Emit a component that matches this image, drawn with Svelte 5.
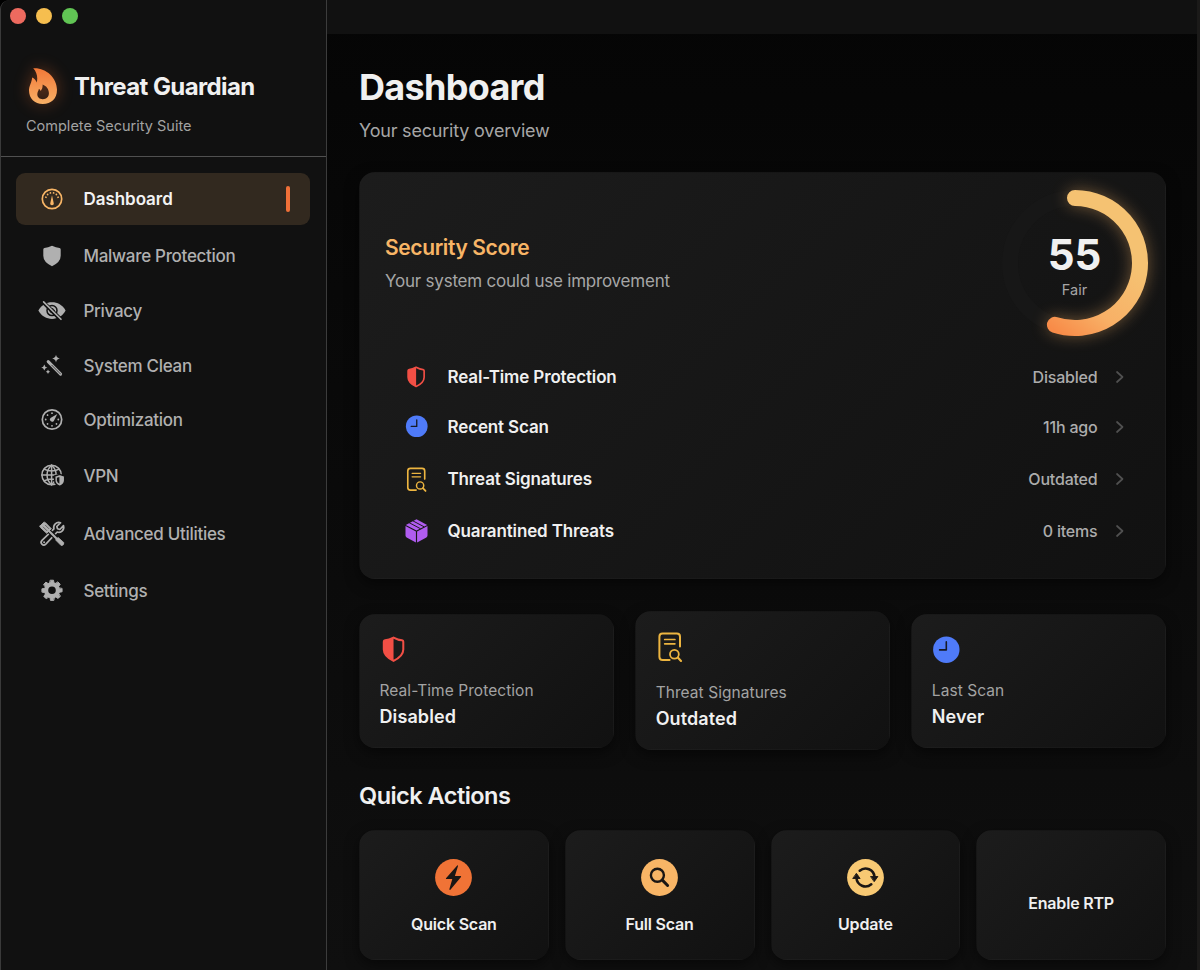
<script>
  const nav = [
    { icon: 'gauge', label: 'Dashboard', h: 52, active: true },
    { icon: 'shield', label: 'Malware Protection', h: 53 },
    { icon: 'eye', label: 'Privacy', h: 50 },
    { icon: 'wand', label: 'System Clean', h: 51 },
    { icon: 'speed', label: 'Optimization', h: 50 },
    { icon: 'globe', label: 'VPN', h: 53 },
    { icon: 'tools', label: 'Advanced Utilities', h: 55 },
    { icon: 'gear', label: 'Settings', h: 52 }
  ];
  const rows = [
    { icon: 'half', label: 'Real-Time Protection', value: 'Disabled', h: 49 },
    { icon: 'clock', label: 'Recent Scan', value: '11h ago', h: 50 },
    { icon: 'doc', label: 'Threat Signatures', value: 'Outdated', h: 55 },
    { icon: 'box', label: 'Quarantined Threats', value: '0 items', h: 49 }
  ];
  const stats = [
    { icon: 'half', label: 'Real-Time Protection', value: 'Disabled' },
    { icon: 'doc', label: 'Threat Signatures', value: 'Outdated', tall: true },
    { icon: 'clock', label: 'Last Scan', value: 'Never' }
  ];
  const actions = [
    { icon: 'bolt', label: 'Quick Scan' },
    { icon: 'search', label: 'Full Scan' },
    { icon: 'sync', label: 'Update' },
    { icon: null, label: 'Enable RTP' }
  ];
  const score = 55;
  const end = (score / 100) * 2 * Math.PI;
  const arc = `M73 8 A65 65 0 ${score > 50 ? 1 : 0} 1 ${73 + 65 * Math.sin(end)} ${73 - 65 * Math.cos(end)}`;
  const ticks = [-90, -54, -18, 18, 54, 90];
  const dots = [-135, -90, -45, 0, 90, 135, 180];
  const teeth = [0, 45, 90, 135, 180, 225, 270, 315];
</script>

{#snippet navIcon(name)}
  <svg width="28" height="28" viewBox="0 0 28 28" fill="none" stroke="currentColor" stroke-linecap="round" stroke-linejoin="round">
    {#if name === 'gauge'}
      <circle cx="14" cy="14" r="9.7" stroke-width="1.7" />
      {#each ticks as a}
        <circle cx="14" cy="7.7" r="0.9" fill="currentColor" stroke="none" transform="rotate({a * 0.82} 14 14)" />
      {/each}
      <path d="M14 10.2 L15.7 18 A1.75 1.75 0 1 1 12.3 18 Z" fill="currentColor" stroke="none" />
    {:else if name === 'shield'}
      <path d="M14 3.8 Q18 5.8 21.6 6.1 Q22.7 6.3 22.7 7.4 V13.8 Q22.7 20.2 14 24.2 Q5.3 20.2 5.3 13.8 V7.4 Q5.3 6.3 6.4 6.1 Q10 5.8 14 3.8 Z" fill="currentColor" stroke="none" />
    {:else if name === 'eye'}
      <path d="M.4 13.6 C3.500 7.800 8.500 5.300 14 5.300 S24.500 7.800 27.600 13.600 C24.500 19.400 19.500 21.900 14 21.900 S3.500 19.400 .4 13.600 Z" fill="currentColor" stroke="none" />
      <circle cx="14" cy="13.600" r="5" stroke="#111" stroke-width="1.500" />
      <circle cx="14" cy="13.600" r="2.100" stroke="#111" stroke-width="1" />
      <path d="M4.700 4.700 L22.700 22.500" stroke="#111" stroke-width="4" />
      <path d="M5.600 4.900 L23 22.300" stroke-width="1.600" />
    {:else if name === 'wand'}
      <path d="M10.200 9.600 L22.600 22.100" stroke-width="3" />
      <path d="M13.800 13.200 L22.500 22" stroke="#111" stroke-width=".7" />
      <path d="M18 2.800 Q18.600 6 21.800 6.600 Q18.600 7.200 18 10.400 Q17.400 7.200 14.200 6.600 Q17.400 6 18 2.800 Z M6.300 12.400 Q6.800 15 9.400 15.500 Q6.800 16 6.300 18.600 Q5.800 16 3.200 15.500 Q5.800 15 6.300 12.400 Z M10 17.600 Q10.400 19.400 12.200 19.800 Q10.400 20.200 10 22 Q9.600 20.200 7.800 19.800 Q9.600 19.400 10 17.600 Z" fill="currentColor" stroke="none" />
    {:else if name === 'speed'}
      <circle cx="14" cy="13.500" r="9.700" stroke-width="1.700" />
      {#each dots as a}
        <circle cx="14" cy="7.200" r=".9" fill="currentColor" stroke="none" transform="rotate({a} 14 13.500)" />
      {/each}
      <path d="M19.300 8 L15.800 15 A2.150 2.150 0 1 1 12.500 11.900 Z" fill="currentColor" stroke="none" />
    {:else if name === 'globe'}
      <g stroke-width="1.500">
        <circle cx="13.600" cy="13" r="9.700" />
        <path d="M13.600 3.300 V22.700 M3.900 13 H23.300 M6 7.200 Q13.600 11 21.200 7.200 M6 18.800 Q13.600 15 21.200 18.800" />
        <path d="M13.600 3.300 C7.500 8.500 7.500 17.500 13.600 22.700 M13.600 3.300 C19.700 8.500 19.700 17.500 13.600 22.700" />
      </g>
      <path d="M21.700 12.400 L26.700 14 V18.200 Q26.700 22.300 21.700 24.400 Q16.700 22.300 16.700 18.200 V14 Z" fill="currentColor" stroke="#111" stroke-width="1.500" />
      <path d="M21.400 15 L18.900 15.700 V18.300 Q18.900 20.400 21.400 21.700 Z" fill="#111" stroke="none" />
    {:else if name === 'tools'}
      <path d="M22.600 2.700 L18.800 6.500 L19.500 8.800 L21.800 9.500 L25.500 5.700 C26.700 9.800 23.200 13.300 19.200 12 L7.800 24.200 C5 26.700 1.500 23 4 20.300 L15.900 8.900 C14.800 5 18.400 1.300 22.600 2.700 Z" stroke-width="1.700" />
      <circle cx="6.100" cy="22.200" r="1" fill="currentColor" stroke="none" />
      <path d="M9.500 9.500 L18.500 18.500" stroke="#111" stroke-width="4.400" stroke-linecap="butt" />
      <path d="M10 10 L19.500 19.500" stroke-width="2.100" />
      <path d="M2 6 L5.700 2.300 Q6.700 1.900 7.500 2.700 L13.300 8.700 L8.700 13.300 L2.500 7.600 Q1.700 6.800 2 6 Z" fill="currentColor" stroke="currentColor" stroke-width=".9" />
      <path d="M5.200 7 L8.800 10.600 M7.400 5.200 L10.800 8.600" stroke="#111" stroke-width=".5" />
      <path d="M18.200 18.700 L20.300 17.600 L25.900 22.700 Q26 25.400 23.200 25.600 L18.200 20.600 Z" fill="currentColor" stroke="currentColor" stroke-width=".8" />
    {:else if name === 'gear'}
      {#each teeth as a}
        <path d="M12.500 3.200 H15.500 L16.400 8 H11.600 Z" fill="currentColor" stroke="currentColor" stroke-width=".9" transform="rotate({a} 14 13.300)" />
      {/each}
      <circle cx="14" cy="13.300" r="5.900" stroke-width="4.200" />
    {/if}
  </svg>
{/snippet}

{#snippet statusIcon(name, size)}
  <svg width={size} height={size} viewBox="0 0 28 28" fill="none" stroke-linecap="round" stroke-linejoin="round">
    {#if name === 'half'}
      <g transform="translate(-1.3 -1.6) scale(1.06)">
        <path d="M14 3 Q18.300 5.400 22 5.600 Q23.200 5.800 23.200 7 V14.300 Q23.200 20.600 14 25 Q4.800 20.600 4.800 14.300 V7 Q4.800 5.800 6 5.600 Q9.700 5.400 14 3 Z" stroke="#f24f45" stroke-width="1.900" />
        <path d="M14 3 V25 Q4.800 20.600 4.800 14.300 V7 Q4.800 5.800 6 5.600 Q9.700 5.400 14 3 Z" fill="#f24f45" />
      </g>
    {:else if name === 'clock'}
      <circle cx="14.300" cy="13.700" r="13.200" fill="#4f7bf9" />
      <path d="M14.300 5.900 V13.900 H7.600" stroke="#161a26" stroke-width="1.600" />
    {:else if name === 'doc'}
      <g transform="translate(0 -.5)">
        <path d="M24 14 V4.200 Q24 1 20.800 1 H6.600 Q3.400 1 3.400 4.200 V24.200 Q3.400 27.400 6.600 27.400 H13.600" stroke="#edb540" stroke-width="2" />
        <path d="M8.700 7 H18.900 M8.700 11.300 H18.900" stroke="#edb540" stroke-width="1.700" />
        <circle cx="18.400" cy="21.800" r="4.400" stroke="#edb540" stroke-width="1.800" />
        <path d="M21.800 25.100 L25 28.400" stroke="#edb540" stroke-width="2.200" />
      </g>
    {:else if name === 'box'}
      <g transform="translate(0 -1)">
        <path d="M14 .2 L27 7 L14 13.800 L1 7 Z" fill="#b05cf0" />
        <path d="M.6 8.300 L13.300 15 V28.300 L2 22.300 Q.6 21.500 .6 20 Z M27.400 8.300 L14.700 15 V28.300 L26 22.300 Q27.400 21.500 27.400 20 Z" fill="#b05cf0" />
        <path d="M5.300 4.400 L18.500 11.400 M9.700 2.100 L22.900 9.100" stroke="#1a1a1a" stroke-width="1.200" />
      </g>
    {/if}
  </svg>
{/snippet}

<div class="window">
  <aside>
    <div class="lights"><i class="red"></i><i class="amber"></i><i class="green"></i></div>
    <header class="brand">
      <div class="name">
        <svg class="flame" width="30" height="38" viewBox="0 0 30 38">
          <defs>
            <linearGradient id="flame" x1="0" y1="0" x2="0" y2="1">
              <stop offset="0" stop-color="#f27838" />
              <stop offset="1" stop-color="#f8b066" />
            </linearGradient>
          </defs>
          <path fill="url(#flame)" fill-rule="evenodd" d="M5.200 1.200 C17 .2 29 10 29 22.800 C29 31.800 23.300 37 14.800 37 C6.500 37 1 31.500 1 23.600 C1 18.500 3.800 15.800 4.100 10.400 C6.300 11 8 13.200 8.800 15.500 C9.900 10.500 9 5.200 5.200 1.200 Z M14.600 17.500 C14.900 20.800 13.700 22.300 12.800 23.900 C12.300 22.900 11.700 22.200 10.900 21.700 C10.700 23.800 9.300 24.700 9.300 27.300 C9.300 30.300 11.500 32.200 14.800 32.200 C18.400 32.200 20.900 29.800 20.900 26.300 C20.900 22.200 18.500 19 14.600 17.500 Z" />
        </svg>
        <span>Threat Guardian</span>
      </div>
      <div class="tag">Complete Security Suite</div>
    </header>
    <nav>
      {#each nav as item}
        <div class="item" class:active={item.active} style="height:{item.h}px">
          {@render navIcon(item.icon)}
          <span>{item.label}</span>
          {#if item.active}<b></b>{/if}
        </div>
      {/each}
    </nav>
  </aside>

  <main>
    <div class="titlebar"></div>
    <div class="content">
      <h1>Dashboard</h1>
      <p class="sub">Your security overview</p>

      <section class="card score">
        <div class="top">
          <div class="words">
            <h2>Security Score</h2>
            <p>Your system could use improvement</p>
          </div>
          <div class="ring">
            <svg width="146" height="146" viewBox="0 0 146 146" fill="none">
              <defs>
                <linearGradient id="arc" gradientUnits="userSpaceOnUse" x1="110" y1="60" x2="52" y2="140">
                  <stop offset="0" stop-color="#f5c272" />
                  <stop offset=".6" stop-color="#f8b066" />
                  <stop offset="1" stop-color="#f88b48" />
                </linearGradient>
              </defs>
              <circle cx="73" cy="73" r="65" stroke="#171717" stroke-width="16" />
              <path class="arc" d={arc} stroke="url(#arc)" stroke-width="16" stroke-linecap="round" />
            </svg>
            <div class="num"><strong>{score}</strong><span>Fair</span></div>
          </div>
        </div>
        <div class="rows">
          {#each rows as row}
            <div class="row" style="height:{row.h}px">
              {@render statusIcon(row.icon, 23)}
              <span class="label">{row.label}</span>
              <span class="value">{row.value}</span>
              <svg class="chev" width="8" height="12" viewBox="0 0 8 12" fill="none" stroke="#505050" stroke-width="1.700" stroke-linecap="round" stroke-linejoin="round"><path d="M1 1 L6.500 6 L1 11" /></svg>
            </div>
          {/each}
        </div>
      </section>

      <section class="stats">
        {#each stats as s}
          <div class="card stat" class:tall={s.tall}>
            {@render statusIcon(s.icon, 28)}
            <span class="label">{s.label}</span>
            <strong>{s.value}</strong>
          </div>
        {/each}
      </section>

      <h3>Quick Actions</h3>
      <section class="actions">
        {#each actions as a}
          <div class="card action">
            {#if a.icon}
              <svg width="37" height="37" viewBox="0 0 37 37" fill="none" stroke="#1a1614" stroke-linecap="round" stroke-linejoin="round">
                {#if a.icon === 'bolt'}
                  <circle cx="18.500" cy="18.500" r="18.400" fill="#f07336" stroke="none" />
                  <path d="M22.200 6.500 L11 19.200 Q10.600 20 11.500 20.100 H17.300 L14.400 30 Q14.300 31.300 15.400 30.700 L26 18 Q26.500 17 25.500 16.900 H19.900 L23 7 Q23 6 22.200 6.500 Z" fill="#1a1614" stroke="none" />
                {:else if a.icon === 'search'}
                  <circle cx="18.500" cy="18.500" r="18.400" fill="#f8b566" stroke="none" />
                  <circle cx="16.400" cy="16.200" r="6.500" stroke-width="2.400" />
                  <path d="M21.600 21.400 L26.600 26.500" stroke-width="3" />
                {:else}
                  <circle cx="18.500" cy="18.500" r="18.400" fill="#f8c973" stroke="none" />
                  <path d="M12.700 11.700 A9 9 0 0 1 27.500 18 M24.300 25.300 A9 9 0 0 1 9.500 19" stroke-width="2.600" />
                  <path d="M23.900 17.500 H30.900 L27.400 22.400 Z M6.100 19.500 H13.100 L9.600 14.600 Z" fill="#1a1614" stroke-width=".9" />
                {/if}
              </svg>
            {/if}
            <span>{a.label}</span>
          </div>
        {/each}
      </section>
    </div>
  </main>
  <div class="edge"></div>
</div>

<style>
  :global(body) { background: #000; overflow: hidden; }
  .window {
    box-sizing: border-box; width: 1200px; height: 970px; display: flex; overflow: hidden;
    background: #111; color: #f0f0f0; font-family: Inter, sans-serif;
    border-top-left-radius: 9px;
  }
  h1, h2, h3, p { margin: 0; }
  svg { display: block; flex: none; overflow: visible; }
  aside {
    box-sizing: border-box; width: 327px; flex: none; height: 970px;
    border-left: 1px solid #3a3a3a; border-right: 1px solid #3c3c3c; border-top-left-radius: 9px;
    background: #111;
  }
  .lights { display: flex; gap: 10px; padding: 8px 0 0 9px; height: 58px; box-sizing: border-box; }
  .lights i { width: 16px; height: 16px; border-radius: 50%; }
  .red { background: #ed6a5f; }
  .amber { background: #f6be4f; }
  .green { background: #61c554; }
  .brand { height: 99px; box-sizing: border-box; border-bottom: 1px solid #505050; padding: 9px 0 0 25px; }
  .name { display: flex; align-items: center; height: 38px; padding-left: 2px; gap: 16px; font-size: 24px; font-weight: 700; letter-spacing: -0.6px; }
  .flame { filter: drop-shadow(0 0 8px rgba(240, 110, 45, .4)); }
  .tag { margin-top: 12px; font-size: 14.500px; line-height: 18px; color: #a3a3a3; letter-spacing: 0; }
  nav { display: flex; flex-direction: column; gap: 4px; padding: 16px 16px 0 15px; }
  .item { box-sizing: border-box; display: flex; align-items: center; padding: 0 20px 0 22px; border-radius: 9px; font-size: 17px; font-weight: 500; letter-spacing: -.3px; color: #b0b0b0; }
  .item span { margin-left: 17.500px; }
  .item.active { background: #32291f; color: #f2f2f2; font-weight: 600; letter-spacing: -.05px; }
  .item.active svg { color: #f8b566; }
  .item b { margin-left: auto; width: 4.500px; height: 26px; border-radius: 2px; background: #f07038; }
  main { flex: 1; min-width: 0; background: linear-gradient(#050505, #0f0f0f); }
  .titlebar { height: 34px; background: #111; }
  .content { padding: 31px 31px 0 32px; }
  h1 { font-size: 36px; line-height: 44px; font-weight: 700; letter-spacing: -.7px; }
  .sub { margin-top: 10px; font-size: 18px; line-height: 24px; color: #a6a6a6; letter-spacing: -.2px; }
  .card {
    box-sizing: border-box; background: linear-gradient(135deg, #1c1c1c, #111);
    border: 1px solid rgba(255, 255, 255, .008); border-radius: 16px;
    box-shadow: 0 5px 14px rgba(0, 0, 0, .5);
  }
  .score { height: 407px; margin-top: 29px; }
  .top { display: flex; justify-content: space-between; height: 179.500px; padding: 17px 17px 0 25px; box-sizing: border-box; }
  .words { padding-top: 45px; }
  h2 { font-size: 21px; line-height: 26px; font-weight: 600; color: #f8b566; letter-spacing: -.38px; }
  .words p { margin-top: 9px; font-size: 17px; line-height: 22px; color: #a6a6a6; letter-spacing: -.22px; }
  .ring { width: 146px; height: 146px; position: relative; }
  .arc { filter: drop-shadow(0 0 8px rgba(248, 181, 102, .4)); }
  .num { position: absolute; inset: 0; display: flex; flex-direction: column; align-items: center; padding: 42px 1px 0 0; }
  .num strong { font-size: 42px; line-height: 46px; font-weight: 700; }
  .num span { margin-top: 2px; font-size: 14.500px; line-height: 20px; color: #a6a6a6; }
  .row { display: flex; align-items: center; padding: 0 41.500px 0 44.700px; }
  .row .label { margin-left: 19.800px; font-size: 17px; font-weight: 600; letter-spacing: -.14px; }
  .row .value { margin-left: auto; font-size: 16px; font-weight: 500; color: #acacac; letter-spacing: -.2px; }
  .chev { margin-left: 18px; }
  .stats { display: grid; grid-template-columns: repeat(3, 1fr); gap: 21.500px; align-items: center; height: 139px; margin-top: 32px; }
  .stat { height: 134px; display: flex; flex-direction: column; padding: 21px 20px 0 19.500px; }
  .stat.tall { height: 139px; }
  .stat .label { margin-top: 16px; font-size: 15.500px; line-height: 22px; color: #a3a3a3; letter-spacing: .06px; }
  .stat.tall .label { margin-top: 21px; }
  .stat strong { margin-top: 3px; font-size: 18px; line-height: 24px; font-weight: 600; letter-spacing: .1px; }
  h3 { margin-top: 31px; font-size: 23.500px; line-height: 30px; font-weight: 600; letter-spacing: -.53px; }
  .actions { display: grid; grid-template-columns: repeat(4, 1fr); gap: 16px; margin-top: 19px; }
  .action { height: 130px; display: flex; flex-direction: column; align-items: center; justify-content: center; font-size: 16px; font-weight: 600; letter-spacing: -.2px; line-height: 20px; gap: 18px; padding-top: 2px; }
  .action:last-child { padding-top: 16px; }
  .edge { width: 3px; flex: none; background: #1b1a19; }
</style>
